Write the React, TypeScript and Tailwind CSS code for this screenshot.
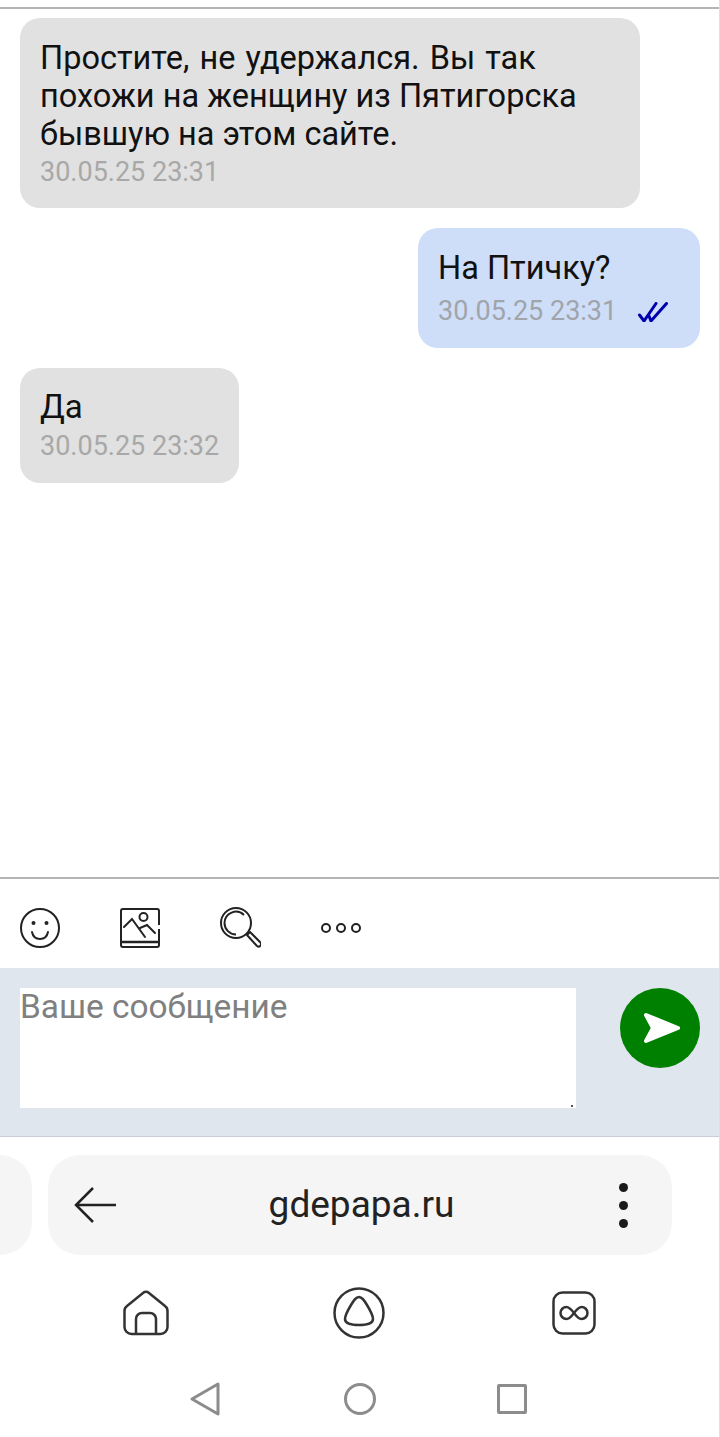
const font = "font-['Roboto',sans-serif]"

function Smile() {
    return (
        <svg viewBox="0 0 40 40" className="w-10 h-10" fill="none" stroke="#222" strokeWidth="2">
            <circle cx="20" cy="20" r="19" />
            <circle cx="13.500" cy="15" r="2" fill="#222" stroke="none" />
            <circle cx="26.500" cy="15" r="2" fill="#222" stroke="none" />
            <path d="M12 24c1 5 4 7 8 7s7-2 8-7" strokeLinecap="round" />
        </svg>
    )
}

function Picture() {
    return (
        <svg viewBox="0 0 40 40" className="w-10 h-10" fill="none" stroke="#222" strokeWidth="2">
            <path d="M39 17V3a2 2 0 0 0-2-2H3a2 2 0 0 0-2 2v34a2 2 0 0 0 2 2h34a2 2 0 0 0 2-2V21" />
            <path d="M1 34h38" strokeWidth="2.500" />
            <circle cx="23.500" cy="9" r="4" />
            <path d="M4 19l8-8 13 18" strokeLinecap="round" />
            <path d="M20 20l7-3 8 8" strokeLinecap="round" />
        </svg>
    )
}

function Search() {
    return (
        <svg viewBox="0 0 41 42" className="w-[41px] h-[42px]" fill="none" stroke="#222" strokeWidth="2">
            <circle cx="16" cy="16" r="15" />
            <path d="M24 8A11.500 11.500 0 0 0 4.500 16 11.500 11.500 0 0 0 16 27.500" />
            <path d="M27 28l3-3 10 10a2.200 2.200 0 0 1-3 4z" strokeLinejoin="round" />
        </svg>
    )
}

function Dots() {
    return (
        <svg viewBox="0 0 40 12" className="w-10 h-3" fill="none" stroke="#222" strokeWidth="2">
            <circle cx="5" cy="6" r="4" />
            <circle cx="20" cy="6" r="4" />
            <circle cx="35" cy="6" r="4" />
        </svg>
    )
}

function Home() {
    return (
        <svg viewBox="0 0 46 46" className="w-[46px] h-[46px]" fill="none" stroke="#333" strokeWidth="2.500">
            <path d="M20 3L4 16a6 6 0 0 0-2.500 5v16a7 7 0 0 0 7 7h29a7 7 0 0 0 7-7V21a6 6 0 0 0-2.500-5L26 3a4.500 4.500 0 0 0-6 0z" />
            <path d="M13 44V29a6 6 0 0 1 6-6h8a6 6 0 0 1 6 6v15" />
        </svg>
    )
}

function Alice() {
    return (
        <svg viewBox="0 0 52 52" className="w-[52px] h-[52px]" fill="none" stroke="#333" strokeWidth="2.500">
            <circle cx="26" cy="26" r="24.500" />
            <path d="M26 10c-3 0-5 3-8 8-3 5-6 10-6 14 0 5 6 6 14 6s14-1 14-6c0-4-3-9-6-14-3-5-5-8-8-8z" />
        </svg>
    )
}

function Loop() {
    return (
        <svg viewBox="0 0 44 44" className="w-11 h-11" fill="none" stroke="#333" strokeWidth="2.500">
            <rect x="1.500" y="1.500" width="41" height="41" rx="9" />
            <path d="M22 22c-3-4-5-6-7.500-6a6 6 0 0 0 0 12c2.500 0 4.500-2 7.500-6s5-6 7.500-6a6 6 0 0 1 0 12c-2.500 0-4.500-2-7.500-6z" />
        </svg>
    )
}

export default function App() {
    return (
        <div className={`${font} relative flex flex-col w-[720px] h-[1437px] bg-white overflow-hidden`}>
            <div className="absolute top-0 right-0 w-px h-full bg-[#e0e0e0]"></div>
            <div className="h-[9px] shrink-0 border-b-2 border-[#b4b4b4]"></div>

            <div className="flex flex-col flex-1 pt-[9px] px-5 items-start">
                <div className="w-[620px] h-[190px] bg-[#e1e1e1] rounded-[20px] px-5 pt-[21px]">
                    <p className="text-[32.500px] leading-[38px] text-[#111]"><span className="[word-spacing:2px]">Простите, не удержался. Вы так</span><br />похожи на женщину из Пятигорска<br />бывшую на этом сайте.</p>
                    <p className="text-[27px] leading-[36px] mt-px text-[#a8a8a8]">30.05.25 23:31</p>
                </div>

                <div className="self-end mt-5 w-[282px] h-[120px] bg-[#cfdef8] rounded-[20px] pl-5 pt-[21px]">
                    <p className="text-[32.500px] leading-[38px] text-[#111]">На Птичку?</p>
                    <div className="flex items-center mt-[6px]">
                        <span className="text-[27px] leading-[36px] text-[#a0a4ab]">30.05.25 23:31</span>
                        <svg viewBox="0 0 30 20" className="w-[30px] h-5 ml-[21px] mt-[2px]" fill="none" stroke="#0000b0" strokeWidth="3" strokeLinecap="round">
                            <path d="M1.500 13l4.500 6L18 1.500" />
                            <path d="M11 14l2 5L28.500 1.500" />
                        </svg>
                    </div>
                </div>

                <div className="mt-5 w-[219px] h-[115px] bg-[#e1e1e1] rounded-[20px] pl-5 pt-5">
                    <p className="text-[33px] leading-[38px] text-[#111]">Да</p>
                    <p className="text-[27px] leading-[36px] mt-[2px] whitespace-nowrap text-[#a8a8a8]">30.05.25 23:32</p>
                </div>
            </div>

            <div className="h-[91px] shrink-0 border-t-2 border-[#b4b4b4] flex items-center gap-[60px] px-5 pt-[9px]">
                <Smile />
                <Picture />
                <Search />
                <Dots />
            </div>

            <div className="h-[169px] shrink-0 bg-[#dfe6ee] border-b border-[#c9ced4] flex items-start pt-5 px-5">
                <div className="relative w-[556px] h-[120px] shrink-0 bg-white text-[33.400px] leading-[38px] text-[#808080]">
                    Ваше сообщение
                    <span className="absolute right-[3px] bottom-[1px] w-[2px] h-[2px] bg-[#555]"></span>
                </div>
                <div className="ml-[44px] w-20 h-20 shrink-0 rounded-full bg-[#008000] flex items-center justify-center">
                    <svg viewBox="0 0 40 32" className="w-10 h-8" fill="white" stroke="white" strokeWidth="4" strokeLinejoin="round">
                        <path d="M6 3l32 13L6 29l7-13z" />
                    </svg>
                </div>
            </div>

            <div className="flex gap-4 h-[100px] shrink-0 mt-[18px]">
                <div className="w-8 h-full bg-[#f5f5f5] rounded-r-[32px]"></div>
                <div className="w-[624px] h-full bg-[#f5f5f5] rounded-[32px] flex items-center pl-[26px] pr-[44px]">
                    <svg viewBox="0 0 42 36" className="w-[42px] h-9 shrink-0" fill="none" stroke="#222" strokeWidth="2.500">
                        <path d="M19 1L2 18l17 17" />
                        <path d="M2 18h40" />
                    </svg>
                    <span className="flex-1 text-center text-[37px] leading-[44px] text-[#222] pr-3">gdepapa.ru</span>
                    <div className="flex flex-col gap-[9px]">
                        <div className="w-[9px] h-[9px] rounded-full bg-[#1a1a1a]"></div>
                        <div className="w-[9px] h-[9px] rounded-full bg-[#1a1a1a]"></div>
                        <div className="w-[9px] h-[9px] rounded-full bg-[#1a1a1a]"></div>
                    </div>
                </div>
            </div>

            <div className="flex items-center h-[52px] shrink-0 mt-[32px] pl-[123px]">
                <Home />
                <div className="ml-[164px]"><Alice /></div>
                <div className="ml-[167px]"><Loop /></div>
            </div>

            <div className="flex items-center h-[34px] shrink-0 mt-[43px] mb-[21px] pl-[190px]">
                <svg viewBox="0 0 30 34" className="w-[30px] h-[34px]" fill="none" stroke="#8c8c8c" strokeWidth="3" strokeLinejoin="round">
                    <path d="M28 2L2 17l26 15z" />
                </svg>
                <div className="ml-[124px] w-8 h-8 rounded-full border-[3px] border-[#8c8c8c]"></div>
                <div className="ml-[121px] w-[30px] h-[30px] rounded-[2px] border-[3px] border-[#8c8c8c]"></div>
            </div>
        </div>
    )
}
